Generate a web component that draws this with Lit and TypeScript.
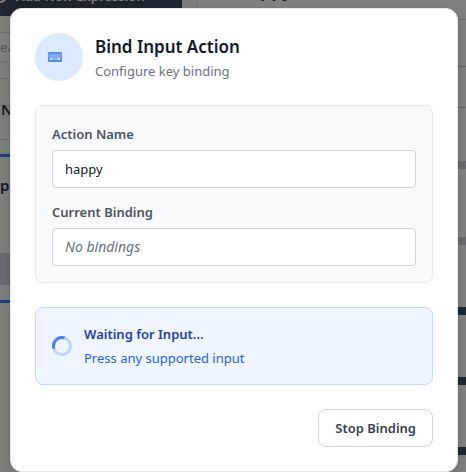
import { LitElement, html, css } from "lit";
import { customElement } from "lit/decorators.js";

@customElement("page-behind")
class PageBehind extends LitElement {
  static styles = css`
    :host {
      display: grid;
      grid-template-columns: 198px 1fr;
      min-height: 100vh;
      overflow: hidden;
      box-sizing: border-box;
      background: #808080;
      color: #111827;
    }
    .side {
      overflow: hidden;
      border-right: 1px solid #707378;
      background: #7d7f7d;
    }
    .add {
      display: flex;
      align-items: center;
      gap: 9px;
      width: 182px;
      height: 40px;
      margin-top: -24px;
      padding: 0;
      border: 0;
      background: #1f2630;
      color: #808080;
      font: 600 13px/20px "Noto Sans", sans-serif;
    }
    .search {
      display: block;
      width: 182px;
      height: 30px;
      margin-top: 16px;
      box-sizing: border-box;
      padding: 0;
      border: solid #6b6d70;
      border-width: 1px 0;
      background: #808080;
      color: #55585e;
      font: 13px "Noto Sans", sans-serif;
    }
    .search::placeholder {
      color: #55585e;
      opacity: 1;
    }
    .row {
      display: flex;
      align-items: center;
      box-sizing: border-box;
      font-size: 15px;
    }
    .head {
      height: 62px;
      margin-top: 16px;
      padding-left: 1px;
      border: solid #6b6d70;
      border-width: 1px 0;
      font-weight: 600;
    }
    .picked {
      height: 149px;
      margin-top: 14px;
      flex-direction: column;
      align-items: stretch;
      border: solid #1e427b;
      border-width: 3px 0;
    }
    .name {
      flex: 1;
      padding-top: 18px;
      font-weight: 600;
    }
    .band {
      height: 32px;
      margin-bottom: 15px;
      background: #6a6b6e;
    }
    .main {
      display: flex;
      flex-direction: column;
      overflow: hidden;
    }
    .title {
      display: flex;
      align-items: center;
      height: 43px;
      margin-top: -24px;
      padding: 0 0 16px 40px;
      box-sizing: border-box;
      font-size: 18px;
      line-height: 28px;
      font-weight: 600;
    }
    .line {
      border-bottom: 1px solid #636569;
    }
    .l1 {
      height: 46px;
      border-top: 1px solid #6e7072;
    }
    .l2 {
      height: 40px;
    }
    .block {
      flex: none;
      height: 8px;
      background: #6a6c70;
    }
    .dark {
      background: #1f2731;
    }
    .g53 {
      margin-top: 53px;
    }
    .g62 {
      margin-top: 62px;
    }
    .g68 {
      margin-top: 68px;
    }
  `;

  render() {
    return html`
      <div class="side">
        <button class="add" type="button">
          <svg width="7" height="14" viewBox="0 0 7 14" fill="none" stroke="#808080" stroke-width="2" aria-hidden="true">
            <circle cx="0" cy="7" r="6" />
          </svg>
          Add New Expression
        </button>
        <input class="search" aria-label="Search" placeholder="ea" />
        <div class="row head">N</div>
        <div class="row picked">
          <div class="name">pp</div>
          <div class="band"></div>
        </div>
      </div>
      <div class="main">
        <div class="title">happy</div>
        <div class="line l1"></div>
        <div class="line l2"></div>
        <div class="block g53"></div>
        <div class="block g68"></div>
        <div class="block dark g62"></div>
        <div class="block dark g62"></div>
        <div class="block dark g62"></div>
      </div>
    `;
  }
}

@customElement("bind-dialog")
class BindDialog extends LitElement {
  static styles = css`
    :host {
      display: block;
      box-sizing: border-box;
      padding: 24px;
      border: 1px solid #e5e7eb;
      border-radius: 12px;
      background: #fff;
      box-shadow: 0 4px 12px rgb(0 0 0 / 15%);
      color: #111827;
      font: 13px/20px "Noto Sans", "Open Sans", sans-serif;
    }
    h2,
    p {
      margin: 0;
    }
    header {
      display: flex;
      align-items: center;
      gap: 12px;
    }
    .badge {
      display: flex;
      align-items: center;
      box-sizing: border-box;
      width: 48px;
      height: 48px;
      padding-left: 13px;
      border-radius: 50%;
      background: #dbeafe;
    }
    h2 {
      font-size: 17px;
      line-height: 28px;
      font-weight: 600;
    }
    .sub {
      color: #6b7280;
    }
    .card {
      margin-top: 24px;
      padding: 16px;
      border: 1px solid #e5e7eb;
      border-radius: 8px;
      background: #f9fafb;
    }
    label {
      display: block;
      margin-bottom: 4px;
      line-height: 24px;
      font-weight: 600;
      color: #4b5563;
    }
    input {
      display: block;
      box-sizing: border-box;
      width: 100%;
      height: 38px;
      padding: 0 12px;
      border: 1px solid #d1d5db;
      border-radius: 4px;
      background: #fff;
      color: #111827;
      font: inherit;
    }
    input::placeholder {
      color: #6b7280;
      font-size: 14px;
      font-style: italic;
      opacity: 1;
    }
    input + label {
      margin-top: 12px;
    }
    .wait {
      display: flex;
      align-items: center;
      gap: 12px;
      margin-top: 24px;
      padding: 16px;
      border: 1px solid #bfdbfe;
      border-radius: 8px;
      background: #eff6ff;
      color: #2563eb;
    }
    .wait strong {
      display: block;
      margin-bottom: 4px;
      font-weight: 600;
      color: #1e40af;
    }
    footer {
      display: flex;
      justify-content: flex-end;
      margin-top: 24px;
    }
    button {
      height: 38px;
      padding: 0 16px;
      border: 1px solid #d1d5db;
      border-radius: 8px;
      background: #fff;
      color: #374151;
      font: inherit;
      font-weight: 600;
    }
  `;

  render() {
    return html`
      <header>
        <div class="badge">
          <svg width="14" height="10" viewBox="0 0 14 10" aria-hidden="true">
            <rect width="14" height="10" rx="1" fill="#5b8def" />
            <rect x="1" y="2" width="12" height="4" fill="#84a9f6" />
            <rect x="2" y="6" width="2" height="2" fill="#dbeafe" />
            <rect x="10" y="6" width="2" height="2" fill="#dbeafe" />
            <rect x="4" y="6" width="6" height="2" fill="#8fb2f8" />
          </svg>
        </div>
        <div>
          <h2>Bind Input Action</h2>
          <p class="sub">Configure key binding</p>
        </div>
      </header>
      <section class="card">
        <label for="action">Action Name</label>
        <input id="action" type="text" .value=${"happy"} />
        <label for="binding">Current Binding</label>
        <input id="binding" type="text" readonly placeholder="No bindings" />
      </section>
      <section class="wait" role="status">
        <svg width="20" height="20" viewBox="0 0 20 20" fill="none" stroke-width="3" aria-hidden="true">
          <circle cx="10" cy="10" r="8.5" stroke="#bfd3fb" />
          <path d="M1.9 12.6A8.5 8.5 0 0 1 12.6 1.9" stroke="#4a80f0" />
        </svg>
        <div>
          <strong>Waiting for Input...</strong>
          <p>Press any supported input</p>
        </div>
      </section>
      <footer><button type="button">Stop Binding</button></footer>
    `;
  }
}

@customElement("app-root")
class AppRoot extends LitElement {
  static styles = css`
    :host {
      display: grid;
      min-height: 100vh;
      overflow: hidden;
      font-family: "Noto Sans", sans-serif;
    }
    page-behind,
    .overlay {
      grid-area: 1 / 1;
      min-width: 0;
    }
    .overlay {
      position: relative;
      padding: 8px 8px 0 10px;
    }
  `;

  render() {
    return html`
      <page-behind></page-behind>
      <div class="overlay"><bind-dialog role="dialog" aria-label="Bind Input Action"></bind-dialog></div>
    `;
  }
}
